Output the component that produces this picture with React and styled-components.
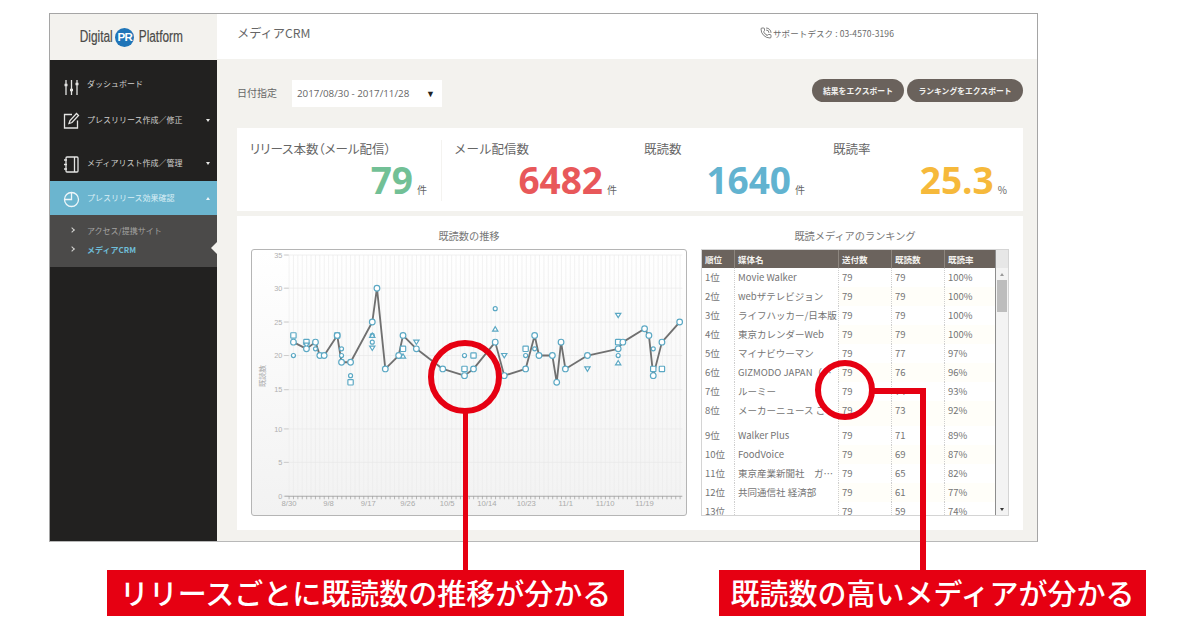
import React from "react";
import styled, { createGlobalStyle } from "styled-components";
import { PhoneCall } from "lucide-react";

const Global = createGlobalStyle`
  html, body { margin: 0; padding: 0; background: #fff; }
  * { box-sizing: border-box; }
  body { font-family: "Noto Sans CJK JP", "Noto Sans", sans-serif; }
`;

const Page = styled.div`
  position: relative;
  width: 1200px;
  height: 630px;
  overflow: hidden;
  padding: 13px 0 0 49px;
  background: #fff;
`;
const Frame = styled.div`
  width: 989px;
  height: 529px;
  border: 1px solid #a5a5a5;
  border-bottom-color: #b8b8b8;
  display: grid;
  grid-template-columns: 167px 1fr;
  background: #f3f2ee;
`;
const Sidebar = styled.aside`
  display: flex;
  flex-direction: column;
  background: #222120;
  min-height: 0;
`;
const Logo = styled.div`
  height: 46px;
  background: #f3f2ee;
  display: flex;
  align-items: center;
  justify-content: center;
  gap: 3px;
  padding-right: 4px;
  color: #4a4a48;
`;
const LogoWord = styled.span`
  font-family: "Liberation Sans", sans-serif;
  font-size: 16px;
  -webkit-text-stroke: 0.2px #4a4a48;
  display: inline-block;
  white-space: nowrap;
  margin: 0 ${(p) => p.$m}px;
  transform: scaleX(0.74);
`;
const LogoBadge = styled.span`
  width: 19px;
  height: 19px;
  margin-right: 2px;
  border-radius: 50%;
  background: #1f75b8;
  color: #fff;
  font-family: "Liberation Sans", sans-serif;
  font-size: 11.5px;
  font-weight: 700;
  letter-spacing: -0.5px;
  display: flex;
  align-items: center;
  justify-content: center;
`;
const Nav = styled.nav`
  display: flex;
  flex-direction: column;
`;
const NavItem = styled.div`
  height: ${(p) => p.$h}px;
  padding: ${(p) => p.$pt}px 7px 0 13px;
  display: flex;
  align-items: flex-start;
  gap: 7px;
  font-size: 8px;
  line-height: 14px;
  font-weight: 400;
  color: ${(p) => (p.$active ? "#d9eef5" : "#d0d0ce")};
  background: ${(p) => (p.$active ? "#6bb5cf" : "transparent")};
  white-space: nowrap;
`;
const NavIcon = styled.svg`
  width: 17px;
  height: 17px;
  flex: none;
  margin-top: ${(p) => p.$mt || 0}px;
  stroke: ${(p) => (p.$active ? "#eef6f9" : "#e4e4e2")};
  stroke-width: 1.3;
  fill: none;
`;
const NavLabel = styled.span`
  flex: 1;
  margin-top: ${(p) => p.$mt || 0}px;
`;
const Caret = styled.span`
  width: 0;
  height: 0;
  flex: none;
  margin-top: ${(p) => p.$mt}px;
  border-left: 2.5px solid transparent;
  border-right: 2.5px solid transparent;
  ${(p) => (p.$up ? "border-bottom: 3px solid #eef6f9;" : "border-top: 3px solid #e8e8e6;")}
`;
const SubNav = styled.div`
  position: relative;
  height: 52px;
  background: #4b4a49;
  padding: 8px 0 0 20px;
  display: flex;
  flex-direction: column;
  gap: 5px;
`;
const SubItem = styled.div`
  display: flex;
  align-items: center;
  gap: 13px;
  height: 14px;
  font-size: 8px;
  font-weight: ${(p) => (p.$active ? 700 : 400)};
  color: ${(p) => (p.$active ? "#6fbdd8" : "#a3a3a1")};
  &::before {
    content: "";
    width: 3px;
    height: 3px;
    border-top: 1.2px solid #d5d5d3;
    border-right: 1.2px solid #d5d5d3;
    transform: rotate(45deg);
  }
`;
const Notch = styled.span`
  position: absolute;
  right: 0;
  top: 27px;
  width: 0;
  height: 0;
  border-top: 6px solid transparent;
  border-bottom: 6px solid transparent;
  border-right: 6px solid #f3f2ee;
`;
const Main = styled.main`
  display: flex;
  flex-direction: column;
  min-width: 0;
`;
const TopBar = styled.header`
  height: 45px;
  background: #fff;
  display: flex;
  align-items: center;
  padding: 0 0 7px 20px;
`;
const PageTitle = styled.h1`
  margin: 0;
  width: 523px;
  font-size: 12.2px;
  font-weight: 400;
  color: #666;
  flex: none;
`;
const Support = styled.div`
  display: flex;
  align-items: center;
  gap: 1px;
  font-size: 8.5px;
  color: #6a6a6a;
  letter-spacing: 0.1px;
  svg { color: #555; }
`;
const Content = styled.div`
  padding: 20px 14px 0 20px;
  display: flex;
  flex-direction: column;
`;
const FilterRow = styled.div`
  display: flex;
  align-items: flex-start;
  height: 49px;
`;
const DateLabel = styled.span`
  font-size: 10px;
  color: #666;
  margin: 6px 15px 0 0;
`;
const DateSelect = styled.div`
  width: 150px;
  height: 27px;
  background: #fff;
  display: flex;
  align-items: center;
  justify-content: space-between;
  padding: 0 7px 0 5px;
  margin-top: 1px;
  font-family: "Open Sans", sans-serif;
  font-size: 9.8px;
  color: #666;
  white-space: nowrap;
  b { color: #222; font-size: 9px; }
`;
const Buttons = styled.div`
  margin-left: auto;
  display: flex;
  gap: 3px;
`;
const Pill = styled.button`
  height: 23px;
  width: ${(p) => p.$w}px;
  border: 0;
  border-radius: 12px;
  padding: 0;
  background: #6a625c;
  color: #f3f3f1;
  font-family: inherit;
  font-size: 7.8px;
  font-weight: 700;
`;
const StatsCard = styled.section`
  height: 83px;
  background: #fff;
  display: grid;
  grid-template-columns: 204px 190px 189px 203px;
`;
const Stat = styled.div`
  display: flex;
  flex-direction: column;
  padding: 12px ${(p) => p.$pr}px 0 ${(p) => p.$pl}px;
  position: relative;
  & + &::before {
    content: "";
    position: absolute;
    left: 0;
    top: 12px;
    bottom: 10px;
    width: 1px;
    background: #f4f3f0;
  }
`;
const StatTitle = styled.div`
  font-size: 12.5px;
  line-height: 18px;
  color: #666;
  white-space: nowrap;
  font-feature-settings: ${(p) => (p.$tight ? '"palt"' : "normal")};
`;
const StatValue = styled.div`
  display: flex;
  justify-content: flex-end;
  align-items: baseline;
  gap: 4px;
  margin-top: 1px;
  line-height: 42px;
  font-family: "Open Sans", sans-serif;
  font-size: 37px;
  font-weight: 700;
  color: ${(p) => p.$c};
  small {
    font-family: "Noto Sans CJK JP", sans-serif;
    font-size: 10px;
    font-weight: 400;
    color: #666;
  }
`;
const ChartCard = styled.section`
  margin-top: 5px;
  height: 314px;
  background: #fff;
  display: grid;
  grid-template-columns: 436px 308px;
  column-gap: 14px;
  padding: 11px 0 0 14px;
`;
const Panel = styled.div`
  display: flex;
  flex-direction: column;
  min-width: 0;
`;
const PanelTitle = styled.h2`
  margin: 1px 0 6px;
  height: 15px;
  font-size: 10.2px;
  line-height: 15px;
  font-weight: 400;
  color: #777;
  text-align: center;
`;
const ChartBox = styled.div`
  width: 436px;
  height: 267px;
  border: 1.5px solid #b5b5b5;
  border-radius: 3px;
  background: linear-gradient(#fff, #f2f2f2);
  overflow: hidden;
`;
const ChartSvg = styled.svg`
  display: block;
  width: 100%;
  height: 100%;
`;
const TableWrap = styled.div`
  position: relative;
  width: 308px;
  height: 267px;
  border: 1px solid #d4d4d4;
  overflow: hidden;
  display: flex;
  background: #fff;
`;
const TableBody = styled.div`
  width: 294px;
  flex: none;
  border-right: 1px solid #8d8d8d;
`;
const ROW = "32px 104px 53px 53px 1fr";
const HeadRow = styled.div`
  display: grid;
  grid-template-columns: ${ROW};
  height: 18px;
  background: #6b635d;
  color: #f4f2ef;
  font-size: 8.5px;
  font-weight: 700;
  line-height: 18px;
`;
const Row = styled.div`
  display: grid;
  grid-template-columns: ${ROW};
  height: ${(p) => (p.$tall ? 25 : 19)}px;
  line-height: 19px;
  font-size: 9.5px;
  color: #747474;
`;
const Cell = styled.div`
  padding-left: 3px;
  white-space: nowrap;
  overflow: hidden;
  border-left: ${(p) => (p.$first ? "0" : "1px dotted #cfcfcf")};
  background: ${(p) => (p.$tint ? "#fffef9" : "transparent")};
`;
const HeadCell = styled.div`
  padding-left: 3px;
  border-left: ${(p) => (p.$first ? "0" : "1px solid #8d867f")};
`;
const ScrollBar = styled.div`
  flex: 1;
  display: flex;
  flex-direction: column;
  background: #f3f3f3;
`;
const ScrollCorner = styled.div`
  height: 18px;
  background: #e7e7e7;
`;
const ScrollArrow = styled.div`
  height: 12px;
  display: flex;
  align-items: center;
  justify-content: center;
  &::before {
    content: "";
    border-left: 2.5px solid transparent;
    border-right: 2.5px solid transparent;
    ${(p) => (p.$down ? "border-top: 3px solid #333;" : "border-bottom: 3px solid #999;")}
  }
`;
const ScrollThumb = styled.div`
  height: 32px;
  background: #bdbdbd;
  margin: 0 1px;
`;
const ScrollFill = styled.div`
  flex: 1;
`;
const CircleMark = styled.div`
  position: absolute;
  left: ${(p) => p.$x}px;
  top: ${(p) => p.$y}px;
  width: ${(p) => p.$d}px;
  height: ${(p) => p.$d}px;
  border: ${(p) => p.$b}px solid #e60012;
  border-radius: 50%;
`;
const RedLine = styled.div`
  position: absolute;
  left: ${(p) => p.$x}px;
  top: ${(p) => p.$y}px;
  width: ${(p) => p.$w}px;
  height: ${(p) => p.$h}px;
  background: #e60012;
`;
const Callout = styled.div`
  position: absolute;
  left: ${(p) => p.$x}px;
  top: 570px;
  width: ${(p) => p.$w}px;
  height: 46px;
  background: #e60012;
  color: #fff;
  font-size: 29px;
  font-weight: 500;
  line-height: 45px;
  text-align: center;
  white-space: nowrap;
`;

const Y = { 35: 47, 30: 146, 25: 247, 20: 347, 15: 449, 10: 566, 5: 666, 0: 767 };
const XL = [["8/30", 148], ["9/8", 266], ["9/17", 385], ["9/26", 503], ["10/5", 621], ["10/14", 740], ["10/23", 858], ["11/1", 976], ["11/10", 1094], ["11/19", 1212]];
const LINE = [[161,307],[200,327],[227,307],[240,347],[253,347],[292,287],[305,367],[332,367],[397,247],[411,146],[436,387],[476,347],[489,287],[529,327],[608,387],[673,407],[700,387],[765,307],[792,407],[856,387],[883,287],[896,347],[936,347],[949,427],[962,307],[975,387],[1041,347],[1133,327],[1147,307],[1212,267],[1225,287],[1238,407],[1264,307],[1317,247]];
const SQUARES = [[161,287],[200,307],[292,287],[332,427],[489,327],[673,387],[700,347],[856,327],[1133,307],[1264,387],[1238,387]];
const DIAMONDS = [[161,347],[227,327],[305,347],[397,287],[397,307],[765,207],[673,347],[856,347],[1133,347],[489,287],[305,327],[1238,327],[332,407],[883,327]];
const DOWN = [[200,316],[397,325],[529,307],[792,347],[1041,387],[1133,227]];
const UP = [[489,349],[765,268],[1133,369],[397,287]];
const TICKS = Array.from({ length: 90 }, (_, i) => 148 + i * 13.15);

function Chart() {
  const blue = "#5ba8c4";
  return (
    <ChartSvg viewBox="37 32 1299 791" preserveAspectRatio="none">
      {TICKS.map((x) => (
        <line key={x} x1={x} x2={x} y1={47} y2={767} stroke="#ececec" strokeWidth="2" />
      ))}
      {Object.entries(Y).map(([k, y]) => (
        <g key={k}>
          <line x1={135} x2={1325} y1={y} y2={y} stroke={k === "0" ? "#aaa" : "#e8e8e8"} strokeWidth={k === "0" ? 3 : 2} />
          <line x1={132} x2={147} y1={y} y2={y} stroke="#bbb" strokeWidth="2" />
          <text x={128} y={y + 8} textAnchor="end" fontSize="22" fill="#b0b0b0" fontFamily="Liberation Sans">{k}</text>
        </g>
      ))}
      {TICKS.map((x) => (
        <line key={`t${x}`} x1={x} x2={x} y1={767} y2={776} stroke="#999" strokeWidth="2" />
      ))}
      {XL.map(([l, x]) => (
        <text key={l} x={x} y={797} textAnchor="middle" fontSize="23" fill="#aaa" fontFamily="Liberation Sans">{l}</text>
      ))}
      <text transform="translate(76,408) rotate(-90)" textAnchor="middle" fontSize="22" fill="#aaa" fontFamily="Noto Sans CJK JP">既読数</text>
      <polyline points={LINE.map((p) => p.join(",")).join(" ")} fill="none" stroke="#707070" strokeWidth="5.5" strokeLinejoin="round" />
      <g fill="#fff" stroke={blue} strokeWidth="3.5">
        {SQUARES.map(([x, y]) => <rect key={`${x}-${y}`} x={x - 8} y={y - 8} width="16" height="16" rx="2" />)}
        {DIAMONDS.map(([x, y]) => <circle key={`${x}-${y}`} cx={x} cy={y} r="6" />)}
        {DOWN.map(([x, y]) => <polygon key={`${x}-${y}`} points={`${x - 8},${y - 6} ${x + 8},${y - 6} ${x},${y + 7}`} />)}
        {UP.map(([x, y]) => <polygon key={`${x}-${y}`} points={`${x - 8},${y + 6} ${x + 8},${y + 6} ${x},${y - 7}`} />)}
        {LINE.map(([x, y]) => <circle key={`${x}-${y}`} cx={x} cy={y} r="8.5" />)}
      </g>
    </ChartSvg>
  );
}

const ROWS = [
  ["1位", "Movie Walker", "79", "79", "100%"],
  ["2位", "webザテレビジョン", "79", "79", "100%"],
  ["3位", "ライフハッカー/日本版", "79", "79", "100%"],
  ["4位", "東京カレンダーWeb", "79", "79", "100%"],
  ["5位", "マイナビウーマン", "79", "77", "97%"],
  ["6位", "GIZMODO JAPAN（…", "79", "76", "96%"],
  ["7位", "ルーミー", "79", "74", "93%"],
  ["8位", "メーカーニュース ご", "79", "73", "92%"],
  ["9位", "Walker Plus", "79", "71", "89%"],
  ["10位", "FoodVoice", "79", "69", "87%"],
  ["11位", "東京産業新聞社　ガ…", "79", "65", "82%"],
  ["12位", "共同通信社 経済部", "79", "61", "77%"],
  ["13位", "", "79", "59", "74%"],
];

const STATS = [
  { t: "リリース本数（メール配信）", v: "79", u: "件", c: "#72c096", pl: 13, pr: 14, tight: true },
  { t: "メール配信数", v: "6482", u: "件", c: "#e8585a", pl: 13, pr: 14 },
  { t: "既読数", v: "1640", u: "件", c: "#62b3d0", pl: 13, pr: 15 },
  { t: "既読率", v: "25.3", u: "%", c: "#f6b93b", pl: 13, pr: 16 },
];

export default function App() {
  return (
    <Page>
      <Global />
      <Frame>
        <Sidebar>
          <Logo>
            <LogoWord $m={-6}>Digital</LogoWord>
            <LogoBadge>PR</LogoBadge>
            <LogoWord $m={-8}>Platform</LogoWord>
          </Logo>
          <Nav>
            <NavItem $h={38} $pt={17}>
              <NavIcon viewBox="0 0 17 17" $mt={2}>
                <path d="M3 1v15M8.500 1v15M14 1v15" />
                <path d="M1.500 6h3M7 11h3M12.500 5h3" strokeWidth="2.400" />
              </NavIcon>
              <NavLabel>ダッシュボード</NavLabel>
            </NavItem>
            <NavItem $h={44} $pt={14}>
              <NavIcon viewBox="0 0 17 17">
                <path d="M9 2.500H1.500v13.500h13V8.500" />
                <path d="M6 11.500l1-3 6.500-7 2 2-6.500 7z" />
              </NavIcon>
              <NavLabel $mt={1}>プレスリリース作成／修正</NavLabel>
              <Caret $mt={7} />
            </NavItem>
            <NavItem $h={39} $pt={13}>
              <NavIcon viewBox="0 0 17 17" $mt={1}>
                <rect x="3" y="1" width="12" height="15" rx="1" />
                <path d="M11.500 1v15M1 4h3M1 8.500h3M1 13h3" />
              </NavIcon>
              <NavLabel $mt={1}>メディアリスト作成／管理</NavLabel>
              <Caret $mt={7} />
            </NavItem>
            <NavItem $h={34} $pt={10} $active>
              <NavIcon viewBox="0 0 17 17" $active>
                <circle cx="8.500" cy="8.500" r="7" />
                <path d="M8.500 1.500v7H1.500" />
              </NavIcon>
              <NavLabel>プレスリリース効果確認</NavLabel>
              <Caret $mt={6} $up />
            </NavItem>
            <SubNav>
              <SubItem>アクセス/提携サイト</SubItem>
              <SubItem $active>メディアCRM</SubItem>
              <Notch />
            </SubNav>
          </Nav>
        </Sidebar>
        <Main>
          <TopBar>
            <PageTitle>メディアCRM</PageTitle>
            <Support>
              <PhoneCall size={12} strokeWidth={1.500} />
              サポートデスク : 03-4570-3196
            </Support>
          </TopBar>
          <Content>
            <FilterRow>
              <DateLabel>日付指定</DateLabel>
              <DateSelect>
                <span>2017/08/30 - 2017/11/28</span>
                <b>▼</b>
              </DateSelect>
              <Buttons>
                <Pill $w={92}>結果をエクスポート</Pill>
                <Pill $w={116}>ランキングをエクスポート</Pill>
              </Buttons>
            </FilterRow>
            <StatsCard>
              {STATS.map((s) => (
                <Stat key={s.t} $pl={s.pl} $pr={s.pr}>
                  <StatTitle $tight={s.tight}>{s.t}</StatTitle>
                  <StatValue $c={s.c}>
                    {s.v}
                    <small>{s.u}</small>
                  </StatValue>
                </Stat>
              ))}
            </StatsCard>
            <ChartCard>
              <Panel>
                <PanelTitle>既読数の推移</PanelTitle>
                <ChartBox>
                  <Chart />
                </ChartBox>
              </Panel>
              <Panel>
                <PanelTitle>既読メディアのランキング</PanelTitle>
                <TableWrap>
                  <TableBody>
                    <HeadRow>
                      {["順位", "媒体名", "送付数", "既読数", "既読率"].map((h, i) => (
                        <HeadCell key={h} $first={i === 0}>{h}</HeadCell>
                      ))}
                    </HeadRow>
                    {ROWS.map((r, ri) => (
                      <Row key={r[0]} $tall={ri === 7}>
                        {r.map((c, i) => (
                          <Cell key={i} $first={i === 0} $tint={ri % 2 === 1 && i > 1}>{c}</Cell>
                        ))}
                      </Row>
                    ))}
                  </TableBody>
                  <ScrollBar>
                    <ScrollCorner />
                    <ScrollArrow />
                    <ScrollThumb />
                    <ScrollFill />
                    <ScrollArrow $down />
                  </ScrollBar>
                </TableWrap>
              </Panel>
            </ChartCard>
          </Content>
        </Main>
      </Frame>
      <CircleMark $x={428} $y={340} $d={74} $b={6} />
      <RedLine $x={463} $y={412} $w={5} $h={158} />
      <CircleMark $x={815} $y={360} $d={60} $b={6} />
      <RedLine $x={874} $y={388} $w={52} $h={6} />
      <RedLine $x={920} $y={388} $w={6} $h={183} />
      <Callout $x={107} $w={517}>リリースごとに既読数の推移が分かる</Callout>
      <Callout $x={719} $w={427}>既読数の高いメディアが分かる</Callout>
    </Page>
  );
}
